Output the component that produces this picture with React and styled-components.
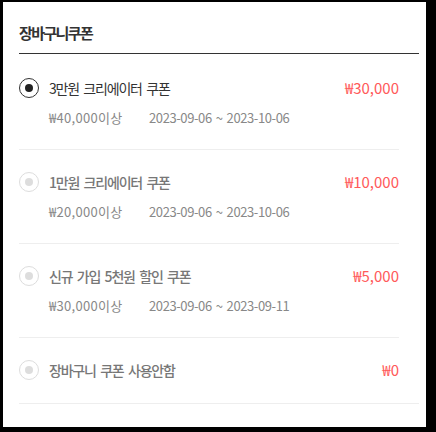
import styled, { createGlobalStyle } from "styled-components";
import { useState } from "react";

const GlobalStyle = createGlobalStyle`
    html, body {
        margin: 0;
        padding: 0;
        background: #000;
    }
    body {
        font-family: "Noto Sans CJK KR", "Noto Sans", sans-serif;
        color: #333;
    }
`

const Panel = styled.div`
    box-sizing: border-box;
    width: 423px;
    height: 425px;
    margin: 2px 0 0 3px;
    padding: 0 7px 0 16px;
    background: #fff;
`

const Title = styled.h3`
    margin: 0;
    padding: 20px 0 9px;
    font-size: 15px;
    line-height: 22px;
    font-weight: 700;
    letter-spacing: -1.6px;
    color: #333;
    border-bottom: 1px solid #333;
`

const CouponList = styled.ul`
    list-style: none;
    margin: 2px 0 0;
    padding: 0;
    border-bottom: 1px solid #eee;
`

const CouponItem = styled.li`
    margin-right: 20px;
    padding: 22px 0 21px;
    border-bottom: 1px solid #eee;
    cursor: pointer;

    &:last-child {
        border-bottom: none;
        padding-bottom: 23px;
    }
`

const TopRow = styled.div`
    display: flex;
    align-items: center;
    height: 20px;
`

const Radio = styled.span`
    position: relative;
    box-sizing: border-box;
    flex: none;
    width: 20px;
    height: 20px;
    margin-right: 10px;
    border-radius: 50%;
    border: ${({ $active }) => ($active ? "1.5px solid #333" : "1px solid #ddd")};

    &::after {
        content: "";
        position: absolute;
        left: 50%;
        top: 50%;
        width: 8px;
        height: 8px;
        margin: -4px 0 0 -4px;
        border-radius: 50%;
        background: ${({ $active }) => ($active ? "#222" : "#ddd")};
    }
`

const Name = styled.span`
    flex: 1;
    font-size: 14px;
    line-height: 20px;
    letter-spacing: -1.2px;
    word-spacing: 2.5px;
    font-weight: ${({ $active }) => ($active ? 400 : 500)};
    color: ${({ $active }) => ($active ? "#333" : "#777")};
`

const Price = styled.span`
    font-size: 15px;
    line-height: 20px;
    color: #ff5a5a;
`

const Meta = styled.div`
    display: flex;
    margin: 10px 0 0 30px;
    font-size: 13px;
    line-height: 20px;
    color: #888;
`

const MinAmount = styled.span`
    width: 100px;
    letter-spacing: 0.3px;
`

const Period = styled.span`
    letter-spacing: -0.4px;
    word-spacing: 1.5px;
`

const coupons = [
    { id: 1, name: "3만원 크리에이터 쿠폰", price: "₩30,000", min: "₩40,000이상", period: "2023-09-06 ~ 2023-10-06" },
    { id: 2, name: "1만원 크리에이터 쿠폰", price: "₩10,000", min: "₩20,000이상", period: "2023-09-06 ~ 2023-10-06" },
    { id: 3, name: "신규 가입 5천원 할인 쿠폰", price: "₩5,000", min: "₩30,000이상", period: "2023-09-06 ~ 2023-09-11" },
    { id: 4, name: "장바구니 쿠폰 사용안함", price: "₩0" },
]

export default function App() {
    const [selected, setSelected] = useState(1)

    return (
        <>
            <GlobalStyle />
            <Panel>
                <Title>장바구니쿠폰</Title>
                <CouponList>
                    {coupons.map(item => {
                        const active = item.id === selected
                        return (
                            <CouponItem key={item.id} onClick={() => setSelected(item.id)}>
                                <TopRow>
                                    <Radio $active={active} />
                                    <Name $active={active}>{item.name}</Name>
                                    <Price>{item.price}</Price>
                                </TopRow>
                                {item.min && (
                                    <Meta>
                                        <MinAmount>{item.min}</MinAmount>
                                        <Period>{item.period}</Period>
                                    </Meta>
                                )}
                            </CouponItem>
                        )
                    })}
                </CouponList>
            </Panel>
        </>
    )
}
